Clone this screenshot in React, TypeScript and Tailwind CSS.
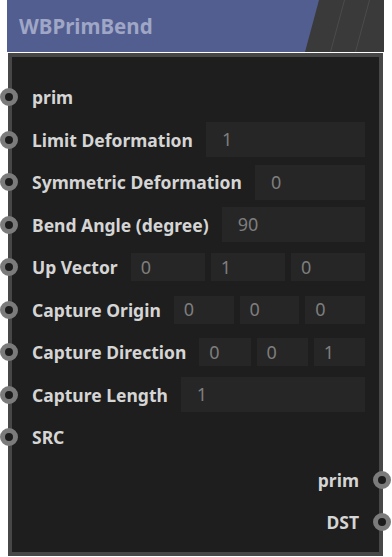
import React from "react";

type Row = { label: string; values?: string[]; out?: boolean };

const rows: Row[] = [
  { label: "prim" },
  { label: "Limit Deformation", values: ["1"] },
  { label: "Symmetric Deformation", values: ["0"] },
  { label: "Bend Angle (degree)", values: ["90"] },
  { label: "Up Vector", values: ["0", "1", "0"] },
  { label: "Capture Origin", values: ["0", "0", "0"] },
  { label: "Capture Direction", values: ["0", "0", "1"] },
  { label: "Capture Length", values: ["1"] },
  { label: "SRC" },
  { label: "prim", out: true },
  { label: "DST", out: true },
];

function Socket({ side }: { side: "left" | "right" }) {
  return (
    <span
      className={
        "absolute top-1/2 -translate-y-1/2 w-[18px] h-[18px] rounded-full border-[5px] border-[#7b7b7b] bg-[#1c1c1c] " +
        (side === "left" ? "-left-[12px]" : "-right-[12px]")
      }
    />
  );
}

function Field({ value, vector }: { value: string; vector: boolean }) {
  return (
    <div
      className={
        "flex-1 min-w-0 flex items-center bg-[#262626] text-[#7e7e7e] text-[18px] " +
        (vector ? "h-7 pl-2.5" : "h-[35px] pl-4")
      }
    >
      {value}
    </div>
  );
}

function NodeRow({ row }: { row: Row }) {
  if (row.out) {
    return (
      <div className="relative h-[42.5px] flex items-center justify-end pr-5">
        <span className="font-bold text-[#d5d5d5] text-[17.5px]">{row.label}</span>
        <Socket side="right" />
      </div>
    );
  }
  const vector = (row.values?.length ?? 0) > 1;
  return (
    <div className="relative h-[42.5px] flex items-center pl-5 pr-3.5">
      <Socket side="left" />
      <span className="shrink-0 font-bold text-[#d5d5d5] text-[17.5px] whitespace-nowrap">{row.label}</span>
      {row.values && (
        <div className="ml-[13px] flex-1 flex gap-1.5">
          {row.values.map((v, i) => (
            <Field key={i} value={v} vector={vector} />
          ))}
        </div>
      )}
    </div>
  );
}

export default function App() {
  return (
    <div className="w-[392px] h-[557px] bg-white font-['Noto_Sans',sans-serif] overflow-hidden">
      <div className="ml-[7px] w-[377px]">
        <div className="relative h-[52px] bg-[#525e90] flex items-center pl-3">
          <svg className="absolute inset-0" width="377" height="52" viewBox="0 0 377 52">
            <polygon points="312,0 377,0 377,52 298,52" fill="#3a3a3a" />
            <line x1="337.5" y1="0" x2="323.5" y2="52" stroke="#4b4b4b" strokeWidth="1" />
            <line x1="362.5" y1="0" x2="348.5" y2="52" stroke="#4b4b4b" strokeWidth="1" />
          </svg>
          <span className="relative font-bold text-[20.5px] text-[#9fa6c6]">WBPrimBend</span>
        </div>
        <div className="mt-px mx-px h-[503px] border-4 border-[#474747] bg-[#1e1e1e] pt-[19px]">
          {rows.map((r, i) => (
            <NodeRow key={i} row={r} />
          ))}
        </div>
      </div>
    </div>
  );
}
